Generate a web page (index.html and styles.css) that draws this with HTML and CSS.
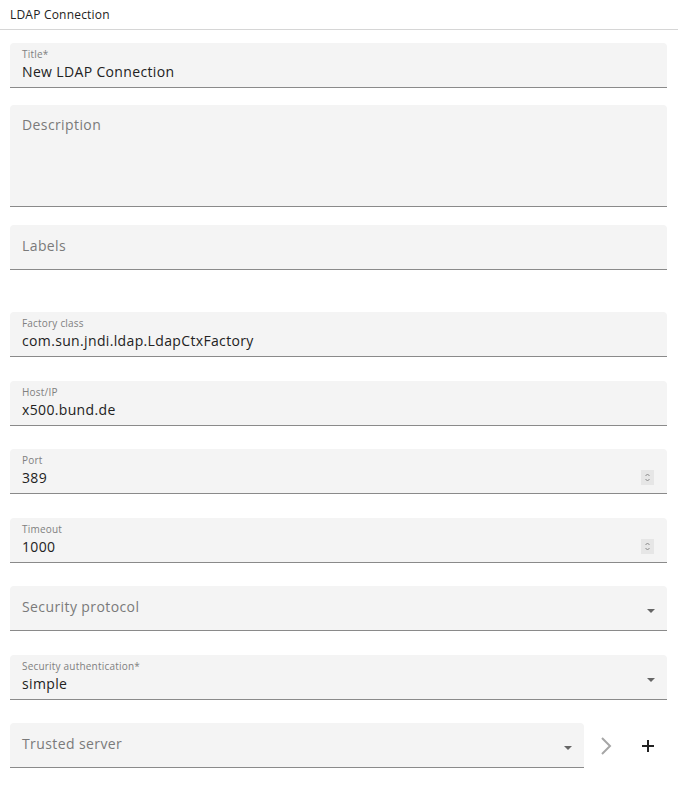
FILE: index.html
```html
<!DOCTYPE html>
<html lang="en">
<head>
  <meta charset="UTF-8" />
  <title>LDAP Connection</title>
  <link rel="stylesheet" href="styles.css">
</head>
<body>
  <div class="header">LDAP Connection</div>

  <div class="form">
    <div class="field filled first">
      <div class="label">Title*</div>
      <div class="value">New LDAP Connection</div>
    </div>

    <div class="field area">
      <div class="placeholder">Description</div>
    </div>

    <div class="field empty">
      <div class="placeholder">Labels</div>
    </div>

    <div class="spacer"></div>

    <div class="field filled">
      <div class="label">Factory class</div>
      <div class="value">com.sun.jndi.ldap.LdapCtxFactory</div>
    </div>

    <div class="field filled">
      <div class="label">Host/IP</div>
      <div class="value">x500.bund.de</div>
    </div>

    <div class="field filled">
      <div class="label">Port</div>
      <div class="value">389</div>
      <div class="spinner">
        <svg width="13" height="15" viewBox="0 0 13 15">
          <rect width="13" height="15" fill="#e6e6e6"/>
          <path d="M4.5 6 L6.5 4 L8.5 6 M4.5 9 L6.5 11 L8.5 9" fill="none" stroke="#888" stroke-width="1"/>
        </svg>
      </div>
    </div>

    <div class="field filled">
      <div class="label">Timeout</div>
      <div class="value">1000</div>
      <div class="spinner">
        <svg width="13" height="15" viewBox="0 0 13 15">
          <rect width="13" height="15" fill="#e6e6e6"/>
          <path d="M4.5 6 L6.5 4 L8.5 6 M4.5 9 L6.5 11 L8.5 9" fill="none" stroke="#888" stroke-width="1"/>
        </svg>
      </div>
    </div>

    <div class="field empty">
      <div class="placeholder">Security protocol</div>
      <div class="arrow"></div>
    </div>

    <div class="field filled">
      <div class="label">Security authentication*</div>
      <div class="value">simple</div>
      <div class="arrow"></div>
    </div>

    <div class="row">
      <div class="field empty grow">
        <div class="placeholder">Trusted server</div>
        <div class="arrow"></div>
      </div>
      <div class="icon-btn next">
        <svg width="16" height="20" viewBox="0 0 16 20">
          <path d="M4 2 L12 10 L4 18" fill="none" stroke="#a6a6a6" stroke-width="2"/>
        </svg>
      </div>
      <div class="icon-btn add">
        <svg width="14" height="14" viewBox="0 0 14 14">
          <path d="M7 1 V13 M1 7 H13" fill="none" stroke="#222" stroke-width="2"/>
        </svg>
      </div>
    </div>
  </div>
</body>
</html>
```

FILE: styles.css
```css
body {
  margin: 0;
  font-family: 'Open Sans', sans-serif;
  color: #222;
  background: #fff;
}

.header {
  height: 29px;
  line-height: 30px;
  padding: 0 10px;
  font-size: 12px;
  letter-spacing: 0.2px;
  border-bottom: 1px solid #d6d6d6;
}

.form {
  padding: 13px 11px 0 10px;
}

.field {
  position: relative;
  box-sizing: border-box;
  height: 45px;
  margin-bottom: 23.5px;
  padding: 0 12px;
  background: #f4f4f4;
  border-radius: 4px 4px 0 0;
  border-bottom: 1px solid #8a8a8a;
}

.field.first {
  margin-bottom: 17px;
}

.field.area {
  height: 102px;
  margin-bottom: 18px;
}

.spacer {
  height: 18.5px;
}

.label {
  padding-top: 5px;
  font-size: 10px;
  line-height: 12px;
  color: #808080;
  letter-spacing: 0.2px;
}

.value {
  padding-top: 3px;
  font-size: 14px;
  line-height: 18px;
  letter-spacing: 0.35px;
  color: #222;
}

.placeholder {
  padding-top: 12px;
  font-size: 14px;
  line-height: 18px;
  letter-spacing: 0.4px;
  color: #7a7a7a;
}

.field.area .placeholder {
  padding-top: 11px;
}

.spinner {
  position: absolute;
  right: 13px;
  top: 21px;
  display: flex;
}

.arrow {
  position: absolute;
  right: 12px;
  top: 23px;
  width: 0;
  height: 0;
  border-left: 4.5px solid transparent;
  border-right: 4.5px solid transparent;
  border-top: 4.5px solid #666;
}

.row {
  display: flex;
  align-items: flex-start;
  margin-right: -1px;
}

.grow {
  flex: 1;
  margin-bottom: 0;
}

.icon-btn {
  height: 45px;
  display: flex;
  align-items: center;
  justify-content: center;
}

.icon-btn.next {
  width: 44px;
}

.icon-btn.add {
  width: 40px;
}
```
